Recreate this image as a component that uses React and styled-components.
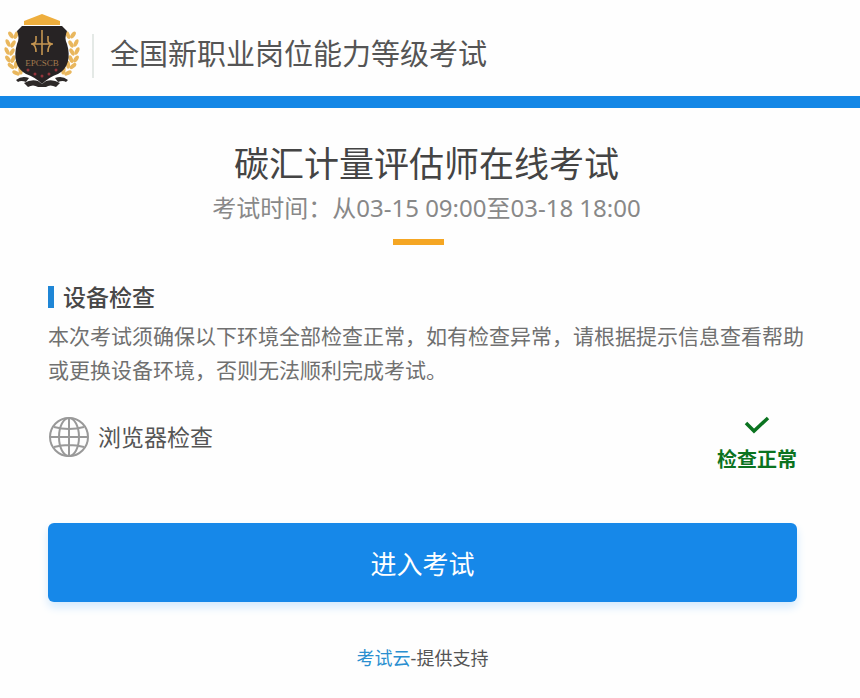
import React from "react";
import styled, { createGlobalStyle } from "styled-components";

const GlobalStyle = createGlobalStyle`
  * {
    box-sizing: border-box;
  }
  body {
    margin: 0;
    background-color: #fefefe;
    color: #555;
    font-family: "Noto Sans", "Noto Sans CJK SC", sans-serif;
  }
  h1, h2, h3, p {
    margin: 0;
    font-weight: 400;
  }
`;

const Header = styled.header`
  display: flex;
  align-items: center;
  height: 108px;
  padding-left: 4px;
  border-bottom: 12px solid #1487e6;
`;

const Logo = styled.svg`
  width: 76px;
  height: 76px;
  margin-top: 6px;
`;

const SiteName = styled.h1`
  height: 44px;
  margin: 16px 0 0 12px;
  padding-left: 16px;
  border-left: 2px solid #e4e9e6;
  font-size: 29px;
  line-height: 40px;
`;

const Main = styled.main`
  padding: 32px 63px 0 48px;
`;

const ExamInfo = styled.section`
  text-align: center;
`;

const ExamName = styled.h2`
  padding-left: 8px;
  color: #444;
  font-size: 35px;
  line-height: 48px;
`;

const ExamTime = styled.p`
  padding-left: 8px;
  color: #888;
  font-size: 24px;
  line-height: 40px;
`;

const Divider = styled.div`
  width: 51px;
  height: 6px;
  margin: 11px auto 0;
  background-color: #f5a623;
`;

const DividerRow = styled.div`
  padding-right: 8px;
`;

const CheckSection = styled.section`
  margin-top: 36px;
`;

const SectionTitle = styled.h3`
  display: flex;
  align-items: center;
  gap: 9px;
  color: #484848;
  font-size: 23px;
  font-weight: 500;
  line-height: 32px;
  &::before {
    content: "";
    width: 6px;
    height: 22px;
    background-color: #1f86d6;
  }
`;

const Notice = styled.p`
  margin: 6px -16px 0 0;
  color: #707070;
  font-size: 21px;
  line-height: 34px;
`;

const CheckItem = styled.div`
  display: flex;
  align-items: flex-start;
  justify-content: space-between;
  margin-top: 29px;
`;

const CheckName = styled.div`
  display: flex;
  align-items: center;
  gap: 8px;
  font-size: 23px;
  line-height: 32px;
  svg {
    width: 42px;
    height: 42px;
  }
`;

const CheckResult = styled.div`
  display: flex;
  flex-direction: column;
  align-items: center;
  gap: 8px;
  color: #0b7320;
  font-size: 20px;
  font-weight: 700;
  line-height: 32px;
  svg {
    width: 26px;
    height: 20px;
  }
`;

const EnterButton = styled.button`
  display: block;
  width: 100%;
  height: 79px;
  margin-top: 47px;
  border: none;
  border-radius: 6px;
  background-color: #1688e9;
  box-shadow: 0 5px 10px #d3e9fc;
  color: #fff;
  font-family: inherit;
  font-size: 26px;
  cursor: pointer;
`;

const Footer = styled.footer`
  padding: 40px 63px 16px 48px;
  font-size: 18px;
  line-height: 32px;
  text-align: center;
  a {
    color: #2a8fd0;
    text-decoration: none;
  }
`;

const leaves = [
  [7, 22, -10],
  [4, 30, 0],
  [3, 38, 0],
  [4, 46, -10],
  [7, 53, -25],
  [12, 60, -40],
];

const Wreath = () => (
  <g fill="#e9b75e">
    {leaves.map(([x, y, angle]) => (
      <g key={y} transform={`rotate(${angle} ${x} ${y})`}>
        <ellipse cx={x} cy={y} rx="2" ry="4" transform={`rotate(-25 ${x} ${y})`} />
        <ellipse cx={x + 5} cy={y + 1} rx="2" ry="4" transform={`rotate(30 ${x + 5} ${y + 1})`} />
      </g>
    ))}
  </g>
);

const LogoMark = () => (
  <Logo viewBox="0 0 76 76" role="img" aria-label="EPCSCB">
    <Wreath />
    <g transform="translate(76 0) scale(-1 1)">
      <Wreath />
    </g>
    <path d="M20 12V8L38 1l18 7v4z" fill="#eeae3d" />
    <g fill="#2d2928">
      <path d="M12 67q6-5 13-2l-3 4q-5-2-8 0z" />
      <path d="M64 67q-6-5-13-2l3 4q5-2 8 0z" />
      <path d="M20 70q7-4 14-2l4 3 4-3q7-2 14 2l-4 4q-6-3-10 0h-8q-5-3-10 0z" />
    </g>
    <path
      d="M18 13h40l5 5q-3 7 0 13c4 13 1 25-9 30q-9 3-16 10-7-7-16-10c-10-5-13-17-9-30q3-6 0-13z"
      fill="#272324"
    />
    <g fill="none" stroke="#c69651" strokeWidth="1.6">
      <path d="M38 17v25M27 31h22M32 23v5q0 2-4 3M44 23v5q0 2 4 3M28 31q4 1 4 8M48 31q-4 1-4 8" />
    </g>
    <text
      x="38"
      y="53"
      fill="#a37a4e"
      fontFamily="Liberation Serif, serif"
      fontSize="9"
      textAnchor="middle"
    >
      EPCSCB
    </text>
    <g fill="#94333b">
      <circle cx="24" cy="57" r="1.5" />
      <circle cx="31" cy="61" r="1.5" />
      <circle cx="38" cy="63" r="1.5" />
      <circle cx="45" cy="61" r="1.5" />
      <circle cx="52" cy="57" r="1.5" />
    </g>
  </Logo>
);

const GlobeIcon = () => (
  <svg viewBox="0 0 42 42" fill="none" stroke="#999" strokeWidth="2" aria-hidden="true">
    <circle cx="21" cy="21" r="19" />
    <ellipse cx="21" cy="21" rx="10" ry="19" />
    <path d="M21 2v38M2 21h38M6 11q15 4 30 0M6 31q15-4 30 0" />
  </svg>
);

const CheckIcon = () => (
  <svg viewBox="0 0 26 20" fill="none" stroke="currentColor" strokeWidth="3.5" aria-hidden="true">
    <path d="M2 7l8 8L24 2" />
  </svg>
);

const App = () => {
  return (
    <div lang="zh-CN">
      <GlobalStyle />
      <Header>
        <LogoMark />
        <SiteName>全国新职业岗位能力等级考试</SiteName>
      </Header>
      <Main>
        <ExamInfo>
          <ExamName>碳汇计量评估师在线考试</ExamName>
          <ExamTime>考试时间：从03-15 09:00至03-18 18:00</ExamTime>
          <DividerRow>
            <Divider />
          </DividerRow>
        </ExamInfo>
        <CheckSection>
          <SectionTitle>设备检查</SectionTitle>
          <Notice>
            本次考试须确保以下环境全部检查正常，如有检查异常，请根据提示信息查看帮助或更换设备环境，否则无法顺利完成考试。
          </Notice>
          <CheckItem>
            <CheckName>
              <GlobeIcon />
              <span>浏览器检查</span>
            </CheckName>
            <CheckResult>
              <CheckIcon />
              <span>检查正常</span>
            </CheckResult>
          </CheckItem>
        </CheckSection>
        <EnterButton type="button">进入考试</EnterButton>
      </Main>
      <Footer>
        <a href="#">考试云</a>-提供支持
      </Footer>
    </div>
  );
};

export default App;
